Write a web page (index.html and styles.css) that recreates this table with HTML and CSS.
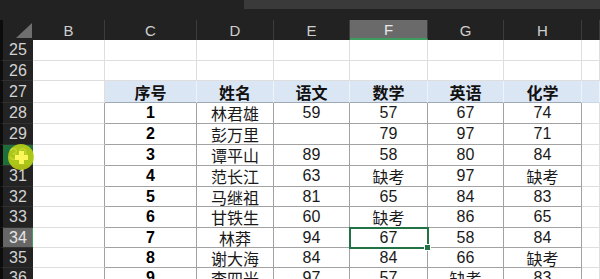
FILE: index.html
```html
<!DOCTYPE html>
<html lang="zh">
<head>
<meta charset="utf-8">
<link rel="stylesheet" href="styles.css">
</head>
<body>
<div class="app">
  <div class="topbar"><div class="topbox"></div></div>
  <div class="sheet">
    <div class="corner"><span class="tri"></span></div>
    <div class="ch">B</div><div class="ch">C</div><div class="ch">D</div><div class="ch">E</div>
    <div class="ch chsel">F</div><div class="ch">G</div><div class="ch">H</div><div class="ch"></div>

    <div class="rh">25</div><div class="c"></div><div class="c"></div><div class="c"></div><div class="c"></div><div class="c"></div><div class="c"></div><div class="c"></div><div class="c"></div>
    <div class="rh">26</div><div class="c"></div><div class="c"></div><div class="c"></div><div class="c"></div><div class="c"></div><div class="c"></div><div class="c"></div><div class="c"></div>

    <div class="rh">27</div><div class="c"></div>
    <div class="th">序号</div><div class="th">姓名</div><div class="th">语文</div><div class="th">数学</div><div class="th">英语</div><div class="th">化学</div><div class="th thend"></div>

    <div class="rh">28</div><div class="c edge"></div><div class="t b">1</div><div class="t">林君雄</div><div class="t">59</div><div class="t">57</div><div class="t">67</div><div class="t">74</div><div class="c"></div>
    <div class="rh">29</div><div class="c edge"></div><div class="t b">2</div><div class="t">彭万里</div><div class="t"></div><div class="t">79</div><div class="t">97</div><div class="t">71</div><div class="c"></div>
    <div class="rh rhgreen">30</div><div class="c edge"></div><div class="t b">3</div><div class="t">谭平山</div><div class="t">89</div><div class="t">58</div><div class="t">80</div><div class="t">84</div><div class="c"></div>
    <div class="rh">31</div><div class="c edge"></div><div class="t b">4</div><div class="t">范长江</div><div class="t">63</div><div class="t">缺考</div><div class="t">97</div><div class="t">缺考</div><div class="c"></div>
    <div class="rh">32</div><div class="c edge"></div><div class="t b">5</div><div class="t">马继祖</div><div class="t">81</div><div class="t">65</div><div class="t">84</div><div class="t">83</div><div class="c"></div>
    <div class="rh">33</div><div class="c edge"></div><div class="t b">6</div><div class="t">甘铁生</div><div class="t">60</div><div class="t">缺考</div><div class="t">86</div><div class="t">65</div><div class="c"></div>
    <div class="rh rhsel">34</div><div class="c edge"></div><div class="t b">7</div><div class="t">林莽</div><div class="t">94</div><div class="t tsel">67</div><div class="t">58</div><div class="t">84</div><div class="c"></div>
    <div class="rh">35</div><div class="c edge"></div><div class="t b">8</div><div class="t">谢大海</div><div class="t">84</div><div class="t">84</div><div class="t">66</div><div class="t">缺考</div><div class="c"></div>
    <div class="rh">36</div><div class="c edge"></div><div class="t b">9</div><div class="t">李四光</div><div class="t">97</div><div class="t">57</div><div class="t">缺考</div><div class="t">83</div><div class="c"></div>
  </div>
  <div class="cursor"><span class="plus-h"></span><span class="plus-v"></span></div>
</div>
</body>
</html>
```

FILE: styles.css
```css
* { box-sizing: border-box; }
html, body { margin: 0; padding: 0; }
body {
  width: 600px;
  height: 279px;
  overflow: hidden;
  background: #ffffff;
  font-family: "Liberation Sans", "Noto Sans CJK SC", sans-serif;
}
.app { position: relative; width: 600px; height: 279px; overflow: hidden; }
.topbar {
  height: 20px;
  background: #222222;
  display: flex;
  justify-content: flex-end;
}
.topbox { width: 356px; height: 9px; background: #3a3a3a; }
.sheet {
  display: grid;
  grid-template-columns: 33px 72px 92px 77px 76px 78px 76px 78px 18px;
  grid-template-rows: 20px 21px 20px 22px 21px 21px 21px 21px 20px 21px 20px 20px 21px;
}
.corner {
  background: #222222;
  border-left: 3px solid #0c0c0c;
  display: flex;
  align-items: flex-end;
  justify-content: flex-end;
  padding: 0 1px 2px 0;
}
.tri {
  width: 0; height: 0;
  border-left: 16px solid transparent;
  border-bottom: 15px solid #6f6f6f;
}
.ch {
  background: #222222;
  color: #cfcfcf;
  font-size: 15px;
  display: flex;
  align-items: center;
  justify-content: center;
  border-right: 1px solid #3c3c3c;
  padding-top: 1px;
}
.chsel {
  background: #6a6a6a;
  color: #e8e8e8;
  border-bottom: 2px solid #3f9c5f;
}
.rh {
  background: #232323;
  border-left: 3px solid #0c0c0c;
  color: #d2d2d2;
  font-size: 16px;
  display: flex;
  align-items: center;
  justify-content: center;
  border-bottom: 1px solid #303030;
}
.rhsel { background: #666666; color: #e6e6e6; box-shadow: inset -1px 0 0 #3f9c5f; }
.rhgreen { background: #1f6d3a; }
.c {
  border-right: 1px solid #dedede;
  border-bottom: 1px solid #dedede;
}
.c.edge { border-right-color: #a2a2a2; }
.th {
  background: #dbe6f4;
  border-right: 1px solid #eef3fa;
  border-bottom: 1px solid #9fa9b3;
  font-weight: bold;
  font-size: 16px;
  color: #111;
  display: flex;
  align-items: center;
  justify-content: center;
}
.th.thend { border-bottom-color: #c9d6e6; }
.t {
  border-right: 1px solid #a2a2a2;
  border-bottom: 1px solid #a2a2a2;
  font-size: 16px;
  color: #1a1a1a;
  display: flex;
  align-items: center;
  justify-content: center;
}
.t.b { font-weight: bold; color: #000; }
.tsel {
  position: relative;
  outline: 2px solid #217346;
  outline-offset: -1px;
}
.tsel::after {
  content: "";
  position: absolute;
  right: -4px;
  bottom: -4px;
  width: 5px;
  height: 5px;
  background: #217346;
  border: 1px solid #ffffff;
}
.cursor {
  position: absolute;
  left: 8px;
  top: 144px;
  width: 26px;
  height: 26px;
  border-radius: 50%;
  background: rgba(196, 214, 20, 0.85);
}
.plus-h, .plus-v {
  position: absolute;
  background: #fbf65a;
}
.plus-h { left: 7px; top: 11px; width: 13px; height: 5px; }
.plus-v { left: 11px; top: 7px; width: 5px; height: 13px; }
```
